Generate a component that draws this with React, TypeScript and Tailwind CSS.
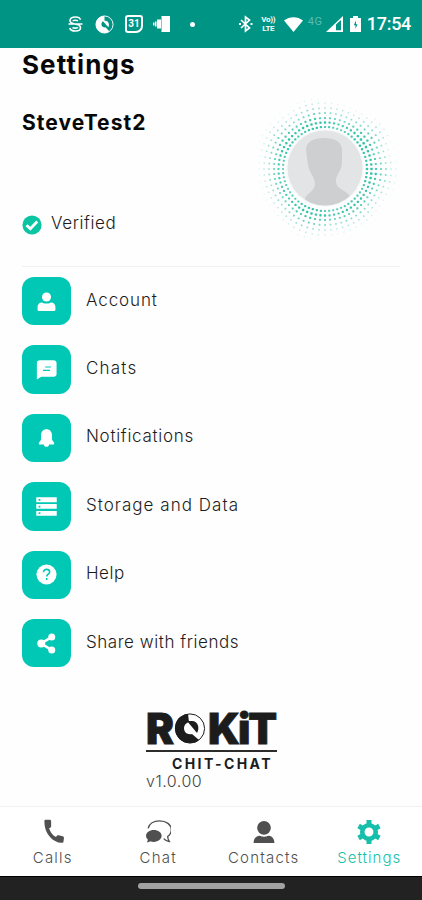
import type { ReactNode } from "react";

const menu: { label: string; labelClass: string; icon: ReactNode }[] = [
  {
    label: "Account",
    labelClass: "tracking-[0.9px]",
    icon: (
      <>
        <circle cx="12" cy="6.8" r="5.2" />
        <path d="M1.800 21.500v-3.200c0-3.400 2-5.300 5.200-5.300 1.500 1 3.100 1.400 5 1.400s3.500-.4 5-1.400c3.200 0 5.200 1.900 5.200 5.300v3.200c0 .8-.5 1.300-1.200 1.300H3c-.7 0-1.200-.5-1.200-1.300z" />
      </>
    ),
  },
  {
    label: "Chats",
    labelClass: "tracking-[1.2px]",
    icon: (
      <>
        <path d="M4.500 1.500h15.300C22.300 1.500 23.500 2.800 23.500 4.700V17c0 2-1.200 3.200-3.200 3.200H6L1 23.500V4.700C1 2.700 2.300 1.500 4.500 1.500z" />
        <path d="M10.500 9.200h6.500M8 13h8" stroke="#00c8b5" strokeWidth="1.3" />
      </>
    ),
  },
  {
    label: "Notifications",
    labelClass: "tracking-[0.7px]",
    icon: (
      <path d="M12 2.500c-4 0-6.300 3-6.300 7v5.200L3.300 18v2h5.600c.3 1.600 1.400 2.700 3.100 2.700s2.800-1.100 3.100-2.700h5.600v-2l-2.400-3.300V9.500c0-4-2.300-7-6.300-7z" />
    ),
  },
  {
    label: "Storage and Data",
    labelClass: "tracking-[1.03px]",
    icon: (
      <>
        <path d="M.3 1.500h23.400v5.500H.3zM.3 9.200h23.400v5.500H.3zM.3 17h23.400v5.500H.3z" />
        <path d="M3 4.300h2M3 12h2M3 19.700h2" stroke="#00c8b5" strokeWidth="2" />
      </>
    ),
  },
  {
    label: "Help",
    labelClass: "tracking-[0.5px]",
    icon: (
      <>
        <circle cx="12" cy="12" r="11.5" />
        <path d="M8.600 9.400c0-2 1.400-3.300 3.500-3.300s3.500 1.200 3.500 3c0 2.500-3.400 2.600-3.400 5.200M12.200 16v2.400" fill="none" stroke="#00c8b5" strokeWidth="1.800" />
      </>
    ),
  },
  {
    label: "Share with friends",
    labelClass: "tracking-[0.55px]",
    icon: (
      <>
        <path d="M18 4.500 6 12l12 7.500" fill="none" stroke="#fff" strokeWidth="3" />
        <circle cx="18" cy="4.500" r="4" />
        <circle cx="6" cy="12" r="4.500" />
        <circle cx="18" cy="19.500" r="4" />
      </>
    ),
  },
];

function StatusBar() {
  return (
    <header className="flex h-12 shrink-0 items-center justify-between bg-[#009485] pr-[11px] pl-[67px] text-white">
      <div className="flex items-center">
        <svg className="h-[18px] w-4" viewBox="0 0 16 18" fill="none" stroke="currentColor" strokeWidth="1.6">
          <path d="M13.500 4.800C13 3 11.500 2 8.500 2 5 2 3 3.300 3 5.500 3 8 5 8.500 8 9c3.500.5 5.500 1.200 5.500 3.700C13.500 15 11.500 16 8.500 16c-3.500 0-5.300-1-5.800-3M11 6C9.500 4.800 6 5 6 6.200M5.500 12.500c1.500 1 5 .8 5.300-.3M1.500 9h14" />
        </svg>
        <svg className="ml-3 h-[19px] w-[19px]" viewBox="0 0 20 20">
          <circle cx="10" cy="10" r="9" fill="none" stroke="currentColor" strokeWidth="1" />
          <path d="M10 1C4 1 1 5 1 10s4 9 9 9c2.500 0 4-.8 5-1.800l-4-4.200c-3 .5-5-2-4-4.500.5-1.500 1.600-2.100 3-2.100z" fill="currentColor" />
          <path d="m8 6 6 7c1.500-3 .5-6.500-3-7z" fill="currentColor" />
        </svg>
        <span className="ml-[11px] flex h-[18px] w-[18px] items-center justify-center rounded-[3px] rounded-br-[7px] border-2 border-white font-['Roboto'] text-[10px] leading-none font-bold">
          31
        </span>
        <svg className="ml-2.5 h-[18px] w-[18px]" viewBox="0 0 18 18" fill="currentColor">
          <path d="M8.500 1H17v16H8.500zM4 4.500h4v9H4zM2 6.500h1.500v5H2zM0 7.500h1.500v3H0z" />
        </svg>
        <span className="ml-[19px] h-[5px] w-[5px] rounded-full bg-white" />
      </div>
      <div className="flex items-center font-['Roboto']">
        <svg className="h-[18px] w-[15px]" viewBox="0 0 15 18" fill="none" stroke="currentColor" strokeWidth="1.7">
          <path d="m3 5 8.500 8L7.500 16V2l4 3L3 13" />
          <path d="M1 9h2M12.500 9h2" strokeWidth="2" />
        </svg>
        <span className="ml-[7px] flex w-[17px] flex-col items-center text-[8px] leading-[9px] font-bold tracking-[-0.3px]">
          <span>Vo))</span>
          <span>LTE</span>
        </span>
        <svg className="ml-[7px] h-[15px] w-[19px]" viewBox="0 0 19 15" fill="currentColor">
          <path d="M0 3.500C5.500-1 13.500-1 19 3.500L9.500 15z" />
        </svg>
        <span className="ml-[5px] w-[15px] pb-[6px] text-[11px] leading-none tracking-[0.5px] text-[#5dbcb3]">4G</span>
        <svg className="ml-[3px] h-4 w-[17px]" viewBox="0 0 17 16" fill="currentColor">
          <path fillRule="evenodd" d="M0 16 17 0v16zM10 8.500v5.700h5V4z" />
        </svg>
        <svg className="ml-[7px] h-4 w-[11px]" viewBox="0 0 11 16">
          <path d="M3 0h5v2h3v14H0V2h3z" fill="currentColor" />
          <path d="M6 4.500 3.800 9.300h1.700v3.700L7.500 8.200H6z" fill="#009485" />
        </svg>
        <span className="ml-[6px] text-[18px] leading-none font-medium tracking-[-0.3px]">17:54</span>
      </div>
    </header>
  );
}

// Rings of dots fade outwards; each lobe is a direction in which they reach further.
const rings = [42, 46.5, 51, 56, 61, 66, 71];
const lobes = [
  { deg: -35, gain: 0.3 },
  { deg: 5, gain: 0.25 },
  { deg: -105, gain: 0.22 },
  { deg: -145, gain: 0.2 },
  { deg: 110, gain: 0.22 },
  { deg: 50, gain: 0.12 },
];

function Avatar() {
  const dots: ReactNode[] = [];
  rings.forEach((r, i) => {
    for (let k = 0; k < 64; k++) {
      const deg = (k * 360) / 64;
      const a = (deg * Math.PI) / 180;
      const boost = Math.max(
        ...lobes.map((l) => {
          const dist = Math.abs(((deg - l.deg + 540) % 360) - 180);
          return Math.max(0, 1 - dist / 30) * l.gain;
        })
      );
      const strength = (i === 0 ? 0.72 : 0.98 - i * 0.17) + boost;
      if (strength <= 0.03) continue;
      const size = 1.1 + Math.min(strength, 1.1) * 1.35;
      dots.push(
        <rect
          key={`${i}-${k}`}
          x={75 + r * Math.cos(a) - size / 2}
          y={76 + r * Math.sin(a) - size / 2}
          width={size}
          height={size}
          rx={size / 3}
          opacity={Math.min(strength, 0.9)}
        />
      );
    }
  });
  return (
    <svg className="h-[150px] w-[150px]" viewBox="0 0 150 150">
      <defs>
        <clipPath id="face">
          <circle cx="75" cy="75" r="37.5" />
        </clipPath>
      </defs>
      <g fill="#20bea0">{dots}</g>
      <circle cx="75" cy="75" r="39" fill="#f7f9f9" />
      <circle cx="75" cy="75" r="37.5" fill="#e2e4e6" />
      <path
        clipPath="url(#face)"
        fill="#cdcfd1"
        d="M56 57c0-8 7-12 18-12s18 4 18 12v11c0 7-2 9-4 13-2 4-3 7-1 11 2 5 10 5 14 13l-5 12H58l-3-12c3-5 10-8 10-14 0-7-6-12-7-19z"
      />
    </svg>
  );
}

function Logo() {
  return (
    <div className="ml-[146px] w-[131px] text-[#1c1c1c]">
      <div className="flex h-[31px] items-center pt-[2px] text-[42px] leading-[31px] font-black [-webkit-text-stroke:0.8px_#1c1c1c]">
        <span className="w-[28px] tracking-[-1px]">R</span>
        <svg className="h-[31px] w-[32px] shrink-0" viewBox="0 0 32 31">
          <circle cx="16" cy="15.500" r="14.600" fill="none" stroke="currentColor" strokeWidth="1" />
          <path d="M14 1C5 2 1 8 1 15.500 1 24 8 30 16 30c4 0 7-1 9-3l-7-6c-5 1-8-2-8-6 0-3 2-5 5-6z" fill="currentColor" />
          <path d="m13 8 10 12c3-5 1-12-5-12z" fill="currentColor" />
        </svg>
        <span className="ml-[2px] tracking-[-2px]">KiT</span>
      </div>
      <div className="mt-[7px] h-[2px] bg-[#2c2c2c]" />
      <p className="mt-[5px] pl-[26px] text-[14px] leading-[14px] font-bold tracking-[2.4px] whitespace-nowrap">CHIT-CHAT</p>
      <p className="mt-[1px] text-[16px] leading-[18px] font-light tracking-[0.5px] text-[#444]">v1.0.00</p>
    </div>
  );
}

const tabs: { label: string; className: string; labelClass: string; icon: ReactNode }[] = [
  {
    label: "Calls",
    className: "text-[#505050]",
    labelClass: "tracking-[1.2px]",
    icon: (
      <path
        fill="currentColor"
        d="M5.500.800h3.700c1 0 1.500.6 1.500 1.500V7c0 .9-.6 1.400-1.900 1.800.8 3.400 3.200 6.700 6.600 8.600.7-1.500 1.500-2 2.600-1.700l3.800 1c1 .3 1.300.9 1.200 1.700l-.4 3.300c-.1.900-.7 1.300-1.600 1.200C12 22.500 4.200 14 4.200 2.300c0-1 .3-1.500 1.300-1.500z"
      />
    ),
  },
  {
    label: "Chat",
    className: "text-[#505050]",
    labelClass: "tracking-[1.2px]",
    icon: (
      <>
        <path d="M3 9C4 4.500 8.500 1.800 14 1.800c6.500 0 11.300 3.600 11.300 8.500 0 3-1.500 5-3.500 6.600.1 1.900.6 3.400 1.500 4.700-2.300-.3-4-1.200-5.300-2.800" fill="none" stroke="currentColor" strokeWidth="1.3" />
        <path d="M8.500 10.500c4.200 0 7.500 2.500 7.500 5.700S12.700 22 8.500 22c-1.300 0-2.300-.2-3.400-.6-.8.7-2 1.100-3.400 1.100.7-.9 1-1.800 1-2.800C1.500 18.700 1 17.600 1 16.200c0-3.200 3.300-5.700 7.500-5.700z" fill="currentColor" />
      </>
    ),
  },
  {
    label: "Contacts",
    className: "text-[#505050]",
    labelClass: "tracking-[1.2px]",
    icon: (
      <>
        <circle cx="12.500" cy="8.500" r="6.600" fill="currentColor" />
        <path d="M2.500 23c0-4.300 2.500-6.900 6-6.900 2.500 1.200 5.500 1.200 8 0 3.500 0 6 2.600 6 6.900z" fill="currentColor" />
      </>
    ),
  },
  {
    label: "Settings",
    className: "text-[#16bfaa]",
    labelClass: "tracking-[1px]",
    icon: (
      <>
        <circle cx="12.500" cy="12.500" r="6.500" fill="none" stroke="currentColor" strokeWidth="4.400" />
        <path d="M12.500 1v4M12.500 20v4M2.500 6.700l3.500 2M19 16.300l3.500 2M2.500 18.300l3.500-2M19 8.700l3.500-2" stroke="currentColor" strokeWidth="4.800" />
      </>
    ),
  },
];

export default function App() {
  return (
    <div className="flex h-[900px] w-[422px] flex-col overflow-hidden bg-[#fefefe] font-['Inter','Open_Sans',sans-serif]">
      <StatusBar />
      <main className="flex flex-1 flex-col px-[22px]">
        <h1 className="mt-[2px] mb-px text-[26px] leading-[30px] font-bold tracking-[1.1px] text-[#080808]">Settings</h1>
        <section className="flex h-[186px] justify-between border-b border-[#edf1f1]">
          <div className="flex flex-col">
            <h2 className="mt-[29px] text-[21px] leading-[26px] font-bold tracking-[1.05px] text-[#080808]">SteveTest2</h2>
            <div className="mt-[75px] flex items-center">
              <svg className="mt-[3px] h-5 w-5" viewBox="0 0 20 20">
                <circle cx="10" cy="10" r="9.600" fill="#0bc4a1" />
                <path d="m4.500 10.200 3.800 3.600 7-7.200" fill="none" stroke="#fff" strokeWidth="2.800" />
              </svg>
              <span className="ml-[9px] text-[17px] leading-6 font-light tracking-[0.6px] text-[#1c1c1c]">Verified</span>
            </div>
          </div>
          <div className="mt-3">
            <Avatar />
          </div>
        </section>

        <ul className="mt-[10px] flex flex-col gap-5">
          {menu.map((item) => (
            <li key={item.label} className="flex h-[48.4px] items-center">
              <span className="flex h-[48.4px] w-[49px] items-center justify-center rounded-[12px] bg-[#00c8b5]">
                <svg className="h-[21px] w-[21px]" viewBox="0 0 24 24" fill="#fff">
                  {item.icon}
                </svg>
              </span>
              <span className={`ml-[15px] pb-[3px] text-[17px] leading-6 font-light text-[#1c1c1c] ${item.labelClass}`}>
                {item.label}
              </span>
            </li>
          ))}
        </ul>

        <div className="mt-[45px] -ml-[22px]">
          <Logo />
        </div>
      </main>

      <nav className="grid h-[70px] shrink-0 grid-cols-4 border-t border-[#f1f1f1] bg-white">
        {tabs.map((tab) => (
          <div key={tab.label} className={`flex flex-col items-center pt-3 ${tab.className}`}>
            <svg className="h-[26px] w-[26px]" viewBox="0 0 25 25">
              {tab.icon}
            </svg>
            <span className={`mt-[3px] text-[15px] leading-5 font-light ${tab.labelClass}`}>{tab.label}</span>
          </div>
        ))}
      </nav>
      <div className="flex h-6 shrink-0 justify-center border-t border-black bg-[#222] pt-[6px]">
        <span className="h-[6px] w-[147px] rounded-full bg-[#a2a2a2]" />
      </div>
    </div>
  );
}
